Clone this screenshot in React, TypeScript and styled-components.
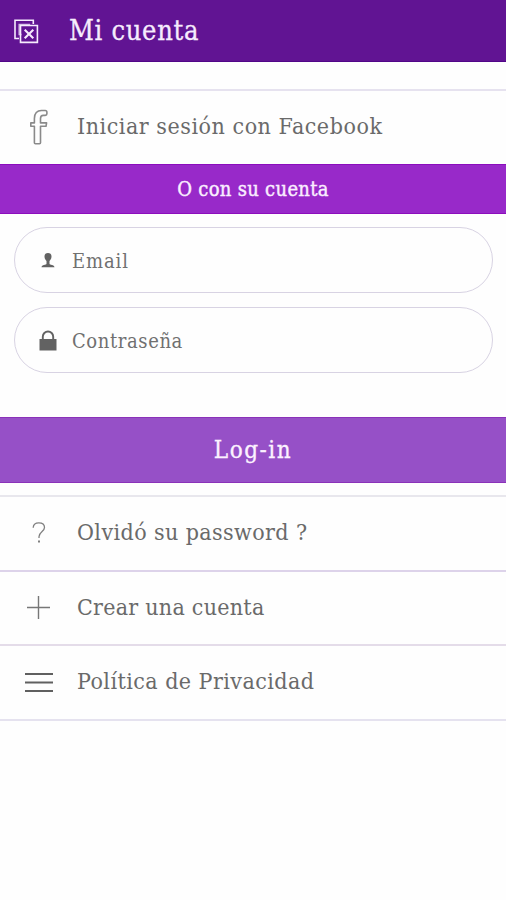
import React from "react";
import styled, { createGlobalStyle } from "styled-components";

const GlobalStyle = createGlobalStyle`
  * { box-sizing: border-box; }
  body {
    margin: 0;
    background: #fefefe;
    font-family: "DejaVu Serif Condensed", "DejaVu Serif", serif;
    font-stretch: condensed;
    color: #6a6a6a;
  }
`;

const Screen = styled.main`
  display: flex;
  flex-direction: column;
  min-height: 900px;
  background: #fefefe;
`;

const Label = styled.span<{ $size?: number; $spacing: number }>`
  font-size: ${(p) => p.$size ?? 23}px;
  letter-spacing: ${(p) => p.$spacing}px;
  line-height: 1.2;
  white-space: nowrap;
`;

const Header = styled.header`
  display: flex;
  align-items: center;
  height: 62px;
  padding: 2px 0 0 14px;
  gap: 30px;
  margin-bottom: 27px;
  background: #611493;
  border-bottom: 1px solid #510688;
  color: #f6ecfd;
`;

const Title = styled.h1`
  margin: 0;
  font-size: 27px;
  font-weight: 400;
  letter-spacing: 0.7px;
  line-height: 1.2;
  -webkit-text-stroke: 0.3px currentColor;
`;

const IconButton = styled.button`
  display: flex;
  padding: 0;
  border: 0;
  background: none;
  color: inherit;
`;

const Row = styled.a<{ $height: number; $line: string }>`
  display: flex;
  align-items: center;
  height: ${(p) => p.$height}px;
  padding-bottom: 1px;
  border-top: 2px solid ${(p) => p.$line};
`;

const RowIcon = styled.span`
  display: flex;
  justify-content: center;
  width: 77px;
  flex: none;
`;

const Divider = styled.h2`
  display: flex;
  align-items: center;
  justify-content: center;
  height: 50px;
  margin: 0;
  padding-bottom: 1px;
  background: #9829c9;
  border: solid #8c0dbd;
  border-width: 1px 0;
  color: #faeeff;
  font-weight: 400;
  -webkit-text-stroke: 0.4px currentColor;
`;

const Form = styled.form`
  display: flex;
  flex-direction: column;
`;

const Fields = styled.div`
  display: flex;
  flex-direction: column;
  gap: 14px;
  padding: 13px 13.5px 44px 14px;
`;

const Field = styled.label`
  display: flex;
  align-items: center;
  height: 66px;
  border: 1.5px solid #d8d3e3;
  border-radius: 33px;
`;

const FieldIcon = styled.span`
  display: flex;
  justify-content: center;
  width: 57px;
  padding-left: 9px;
  flex: none;
`;

const Input = styled.input<{ $spacing: number }>`
  flex: 1;
  min-width: 0;
  padding: 2px 0 0;
  border: 0;
  outline: 0;
  background: transparent;
  font: inherit;
  font-size: 20px;
  letter-spacing: ${(p) => p.$spacing}px;
  &::placeholder { color: #707070; opacity: 1; }
`;

const LoginButton = styled.button`
  height: 66px;
  padding: 0;
  border: solid #8a31b9;
  border-width: 1px 0;
  background: #9650c7;
  color: #fcf2ff;
  font: inherit;
  -webkit-text-stroke: 0.3px currentColor;
`;

const Links = styled.nav`
  margin-top: 12px;
  border-bottom: 2px solid #e5e2ef;
`;

export default function App() {
  return (
    <>
      <GlobalStyle />
      <Screen>
        <Header>
          <IconButton aria-label="Cerrar">
            <svg width="25" height="25" viewBox="0 0 25 25" fill="none" stroke="currentColor" strokeWidth="1.6">
              <path d="M5 19.5H1V1.200h18.300V5" />
              <path d="M7.500 15.500H5.200V5.400h10.200v1" strokeWidth="1.500" opacity=".75" />
              <path d="M6.500 6.500h16.900v16.900H6.500z" />
              <path d="m10.700 10.700 8.600 8.600m0-8.600-8.600 8.600" strokeWidth="2.100" />
            </svg>
          </IconButton>
          <Title>Mi cuenta</Title>
        </Header>
        <Row $height={75} $line="#e6e2ef">
          <RowIcon>
            <svg width="20" height="36" viewBox="0 0 20 36" fill="none" stroke="#8a8a8a" strokeWidth="1.600" strokeLinejoin="round">
              <path d="M5.400 33.800V17.300H1.800v-3.400h3.600V9.400c0-5 2.700-7.900 7-7.900h3.800c1.200 0 1.700.6 1.700 1.700v1.600c0 1.100-.6 1.600-1.700 1.600h-1.900c-2 0-2.800 1.200-2.800 3.100v4.400h6.100l-.6 3.400h-5.500v16.500c0 .6-.4 1-1 1H6.400c-.6 0-1-.4-1-1z" />
            </svg>
          </RowIcon>
          <Label $spacing={0.53}>Iniciar sesión con Facebook</Label>
        </Row>
        <Divider>
          <Label $size={20} $spacing={0.3}>O con su cuenta</Label>
        </Divider>
        <Form>
          <Fields>
            <Field>
              <FieldIcon>
                <svg width="14" height="15" viewBox="0 0 14 15" fill="#626262">
                  <path d="M7 0c2.500 0 3.600 1.600 3.500 3.800C10.400 5.900 9.300 7.200 8.500 8v2.800c0 1.300 5 .9 5 3.500H.5c0-2.600 5-2.200 5-3.500V8C4.700 7.200 3.600 5.900 3.500 3.800 3.400 1.600 4.500 0 7 0z" />
                </svg>
              </FieldIcon>
              <Input type="email" placeholder="Email" $spacing={0.9} />
            </Field>
            <Field>
              <FieldIcon>
                <svg width="18" height="21" viewBox="0 0 18 21">
                  <path d="M3.800 10V6.700a5.200 5.200 0 0 1 10.400 0V10" fill="none" stroke="#626262" strokeWidth="1.900" />
                  <path d="M.5 9h17v11.500H.5z" fill="#626262" />
                </svg>
              </FieldIcon>
              <Input type="password" placeholder="Contraseña" $spacing={0.6} />
            </Field>
          </Fields>
          <LoginButton type="button">
            <Label $size={24} $spacing={1.5}>Log-in</Label>
          </LoginButton>
        </Form>
        <Links>
          <Row $height={75} $line="#e8e7ed">
            <RowIcon>
              <svg width="14" height="22" viewBox="0 0 14 22" fill="none" stroke="#808080" strokeWidth="1.300">
                <path d="M1.200 5.800C1.300 2.600 3.500.9 6.800.9c3.400 0 5.700 1.800 5.700 4.600 0 4.300-5.500 4.500-5.500 9.300v1.300" />
                <path d="M7 18.500v2" strokeWidth="2" />
              </svg>
            </RowIcon>
            <Label $spacing={0.4}>Olvidó su password ?</Label>
          </Row>
          <Row $height={74} $line="#ddd3ea">
            <RowIcon>
              <svg width="23" height="23" viewBox="0 0 23 23" stroke="#777" strokeWidth="1.400">
                <path d="M11.500 0v23M0 11.500h23" />
              </svg>
            </RowIcon>
            <Label $spacing={0.25}>Crear una cuenta</Label>
          </Row>
          <Row $height={75} $line="#e4dce9">
            <RowIcon>
              <svg width="28" height="21" viewBox="0 0 28 21" stroke="#606060" strokeWidth="2.200">
                <path d="M0 2h28M0 10.500h28M0 19h28" />
              </svg>
            </RowIcon>
            <Label $spacing={0.45}>Política de Privacidad</Label>
          </Row>
        </Links>
      </Screen>
    </>
  );
}
